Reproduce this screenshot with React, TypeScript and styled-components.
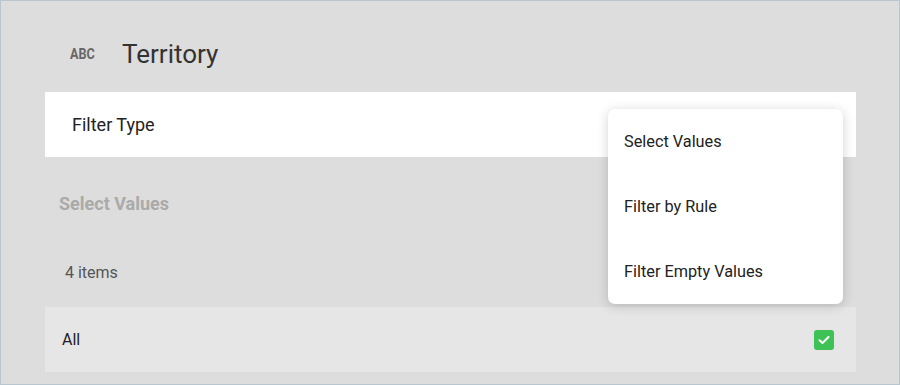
import * as React from "react";
import styled, { createGlobalStyle } from "styled-components";

const textDark = "#222";
const textMid = "#555";
const textMuted = "#aaa";
const backdrop = "#dddddd";
const rowGrey = "#e6e6e6";
const green = "#3ec155";

const GlobalStyle = createGlobalStyle`
  html, body {
    margin: 0;
    padding: 0;
    background: ${backdrop};
  }
  * {
    box-sizing: border-box;
  }
`;

const Frame = styled.div`
  position: relative;
  width: 900px;
  height: 385px;
  border: 1px solid #b9c6cf;
  background: ${backdrop};
  font-family: Roboto, "Noto Sans", sans-serif;
  overflow: hidden;
`;

const Content = styled.div`
  display: flex;
  flex-direction: column;
  margin: 0 43px 0 44px;
`;

const Header = styled.div`
  display: flex;
  align-items: center;
  height: 91px;
  padding: 14px 0 0 25px;
`;

const TypeBadge = styled.span`
  display: inline-block;
  width: 52px;
  font-size: 15px;
  font-weight: 700;
  color: #666;
  transform: scaleX(0.84);
  transform-origin: left center;
`;

const Title = styled.h1`
  margin: 0;
  font-size: 26px;
  font-weight: 400;
  color: #333;
`;

const Row = styled.div<{ bg: string; pad: number }>`
  display: flex;
  align-items: center;
  justify-content: space-between;
  height: 65px;
  padding: 0 22px 0 ${(p) => p.pad}px;
  background: ${(p) => p.bg};
`;

const RowText = styled.span<{ size: number }>`
  font-size: ${(p) => p.size}px;
  color: ${textDark};
`;

const SectionLabel = styled.div`
  display: flex;
  align-items: center;
  height: 80px;
  padding: 12px 0 0 14px;
  font-size: 18px;
  font-weight: 700;
  color: ${textMuted};
`;

const Count = styled.div`
  display: flex;
  align-items: center;
  height: 70px;
  padding-left: 20px;
  font-size: 16px;
  color: ${textMid};
`;

const Checkbox = styled.span`
  display: flex;
  align-items: center;
  justify-content: center;
  width: 20px;
  height: 20px;
  border-radius: 3px;
  background: ${green};
`;

const Menu = styled.ul`
  position: absolute;
  left: 607px;
  top: 108px;
  width: 235px;
  margin: 0;
  padding: 0;
  list-style: none;
  background: #fff;
  border-radius: 7px;
  box-shadow: 0 2px 12px rgba(0, 0, 0, 0.18);
`;

const MenuItem = styled.li`
  display: flex;
  align-items: center;
  height: 65px;
  padding-left: 16px;
  font-size: 16.3px;
  color: ${textDark};
`;

const filterTypes = ["Select Values", "Filter by Rule", "Filter Empty Values"];

export default function App() {
  return (
    <>
      <GlobalStyle />
      <Frame>
        <Content>
          <Header>
            <TypeBadge>ABC</TypeBadge>
            <Title>Territory</Title>
          </Header>
          <Row bg="#fff" pad={27}>
            <RowText size={18}>Filter Type</RowText>
          </Row>
          <SectionLabel>Select Values</SectionLabel>
          <Count>4 items</Count>
          <Row bg={rowGrey} pad={17}>
            <RowText size={16}>All</RowText>
            <Checkbox>
              <svg width="12" height="10" viewBox="0 0 12 10">
                <path
                  d="M1.5 5.2 L4.5 8 L10.5 2"
                  fill="none"
                  stroke="#fff"
                  strokeWidth="2"
                  strokeLinecap="round"
                  strokeLinejoin="round"
                />
              </svg>
            </Checkbox>
          </Row>
        </Content>
        <Menu>
          {filterTypes.map((t) => (
            <MenuItem key={t}>{t}</MenuItem>
          ))}
        </Menu>
      </Frame>
    </>
  );
}
